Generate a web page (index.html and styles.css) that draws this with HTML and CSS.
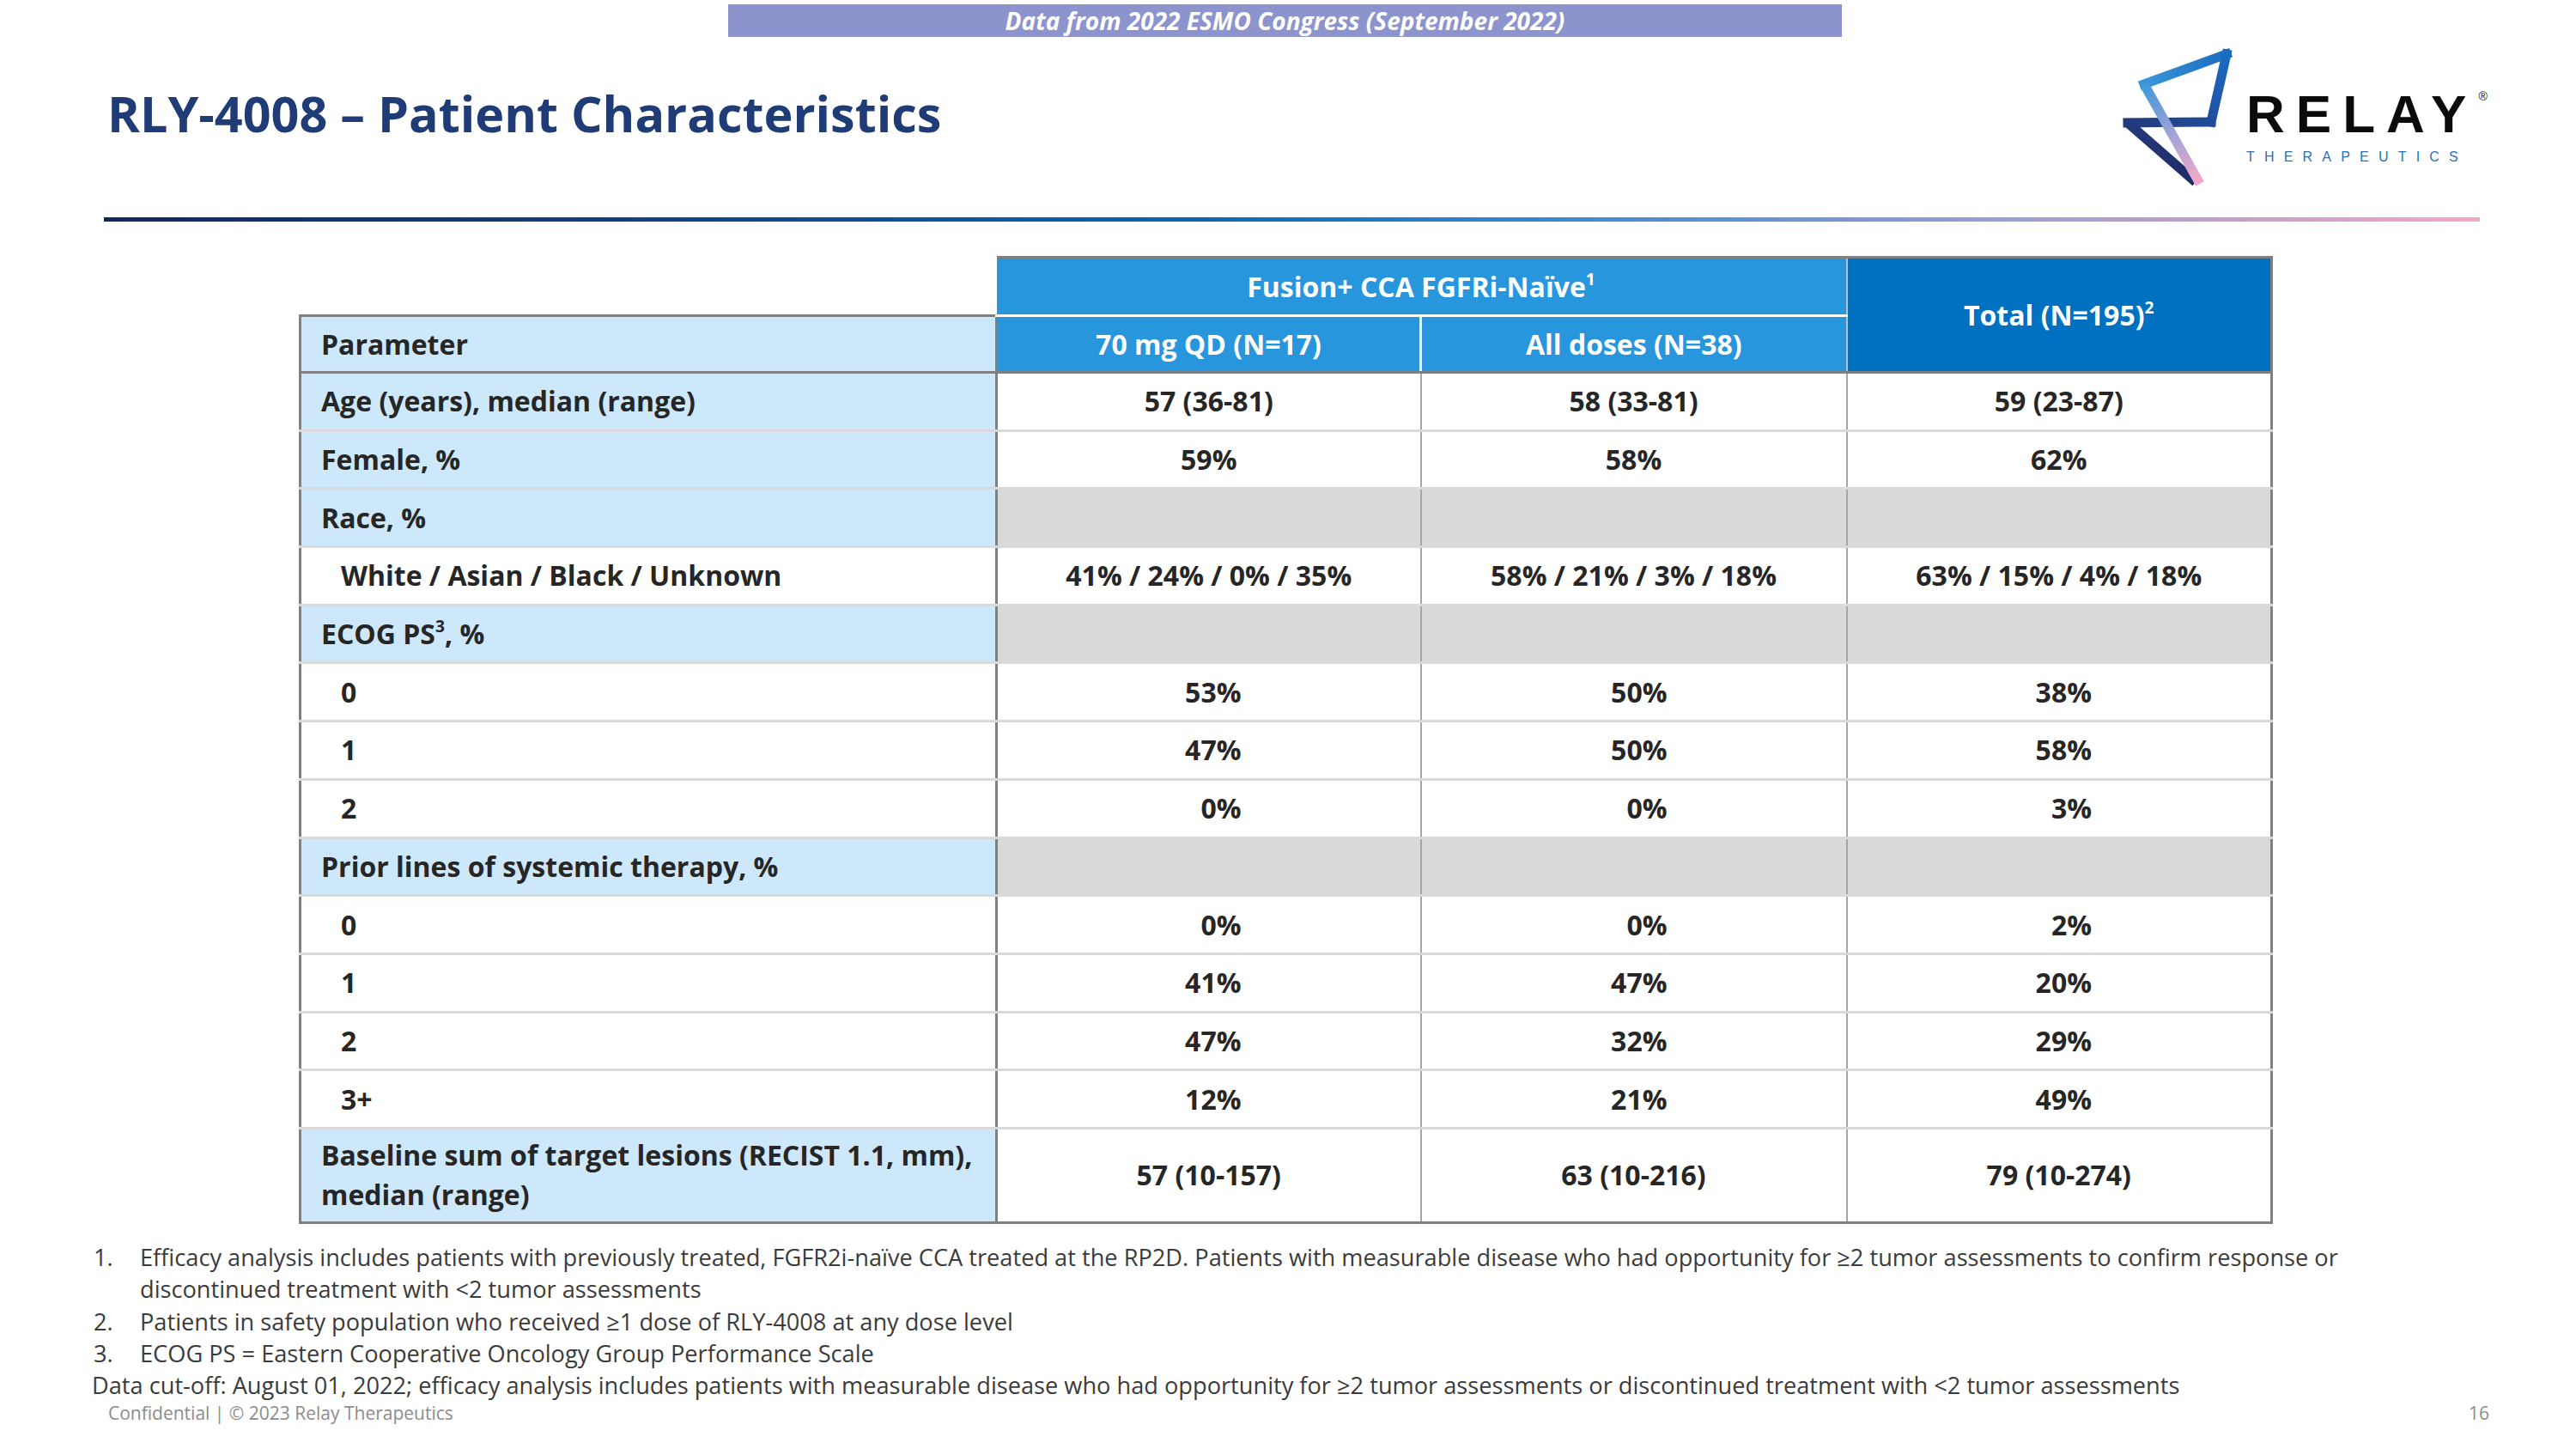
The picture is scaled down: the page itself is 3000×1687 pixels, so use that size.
FILE: index.html
```html
<!DOCTYPE html>
<html lang="en">
<head>
<meta charset="utf-8">
<title>RLY-4008 – Patient Characteristics</title>
<link rel="stylesheet" href="styles.css">
</head>
<body>
<div class="slide">
  <div class="banner">Data from 2022 ESMO Congress (September 2022)</div>
  <header class="head">
    <h1 class="title">RLY-4008 – Patient Characteristics</h1>
    <div class="logo">
      <svg class="mark" width="140" height="170" viewBox="0 0 140 170" xmlns="http://www.w3.org/2000/svg">
        <defs>
          <linearGradient id="gTop" x1="0" y1="0" x2="1" y2="0">
            <stop offset="0" stop-color="#3a96d9"/>
            <stop offset="1" stop-color="#1a6cc0"/>
          </linearGradient>
          <linearGradient id="gRight" x1="0" y1="0" x2="0" y2="1">
            <stop offset="0" stop-color="#1a6cc0"/>
            <stop offset="1" stop-color="#1f4f9f"/>
          </linearGradient>
          <linearGradient id="gMid" x1="1" y1="0" x2="0" y2="0">
            <stop offset="0" stop-color="#1f4d9b"/>
            <stop offset="1" stop-color="#233a7d"/>
          </linearGradient>
          <linearGradient id="gLow" x1="0" y1="0" x2="1" y2="1">
            <stop offset="0" stop-color="#24397c"/>
            <stop offset="1" stop-color="#1d2c64"/>
          </linearGradient>
          <linearGradient id="gLong" gradientUnits="userSpaceOnUse" x1="32" y1="48" x2="97" y2="163">
            <stop offset="0" stop-color="#3f98da"/>
            <stop offset="0.5" stop-color="#9ea4d6"/>
            <stop offset="1" stop-color="#f6a9c8"/>
          </linearGradient>
        </defs>
        <line x1="32" y1="48" x2="128" y2="13" stroke="url(#gTop)" stroke-width="11" stroke-linecap="square"/>
        <line x1="128" y1="13" x2="110" y2="92" stroke="url(#gRight)" stroke-width="11" stroke-linecap="square"/>
        <line x1="110" y1="92" x2="13" y2="93" stroke="url(#gMid)" stroke-width="11" stroke-linecap="square"/>
        <line x1="13" y1="93" x2="92" y2="162" stroke="url(#gLow)" stroke-width="11" stroke-linecap="butt"/>
        <line x1="32" y1="48" x2="97" y2="164" stroke="url(#gLong)" stroke-width="11" stroke-linecap="butt"/>
      </svg>
      <div class="wordmark">
        <div class="relay">RELAY<span class="reg">®</span></div>
        <div class="thera">THERAPEUTICS</div>
      </div>
    </div>
  </header>
  <div class="rule"></div>

  <table class="pt">
    <colgroup>
      <col class="c1"><col class="c2"><col class="c3"><col class="c4">
    </colgroup>
    <thead>
      <tr class="h1">
        <th class="blank"></th>
        <th class="grp" colspan="2">Fusion+ CCA FGFRi-Naïve<sup>1</sup></th>
        <th class="total" rowspan="2">Total (N=195)<sup>2</sup></th>
      </tr>
      <tr class="h2">
        <th class="param">Parameter</th>
        <th class="sub">70 mg QD (N=17)</th>
        <th class="sub sub2">All doses (N=38)</th>
      </tr>
    </thead>
    <tbody>
      <tr><td class="lbl">Age (years), median (range)</td><td>57 (36-81)</td><td>58 (33-81)</td><td class="last">59 (23-87)</td></tr>
      <tr><td class="lbl">Female, %</td><td>59%</td><td>58%</td><td class="last">62%</td></tr>
      <tr><td class="lbl">Race, %</td><td class="gr"></td><td class="gr"></td><td class="gr last"></td></tr>
      <tr><td class="lbl ind">White / Asian / Black / Unknown</td><td>41% / 24% / 0% / 35%</td><td>58% / 21% / 3% / 18%</td><td class="last">63% / 15% / 4% / 18%</td></tr>
      <tr><td class="lbl">ECOG PS<sup>3</sup>, %</td><td class="gr"></td><td class="gr"></td><td class="gr last"></td></tr>
      <tr><td class="lbl ind">0</td><td class="r">53%</td><td class="r">50%</td><td class="r last">38%</td></tr>
      <tr><td class="lbl ind">1</td><td class="r">47%</td><td class="r">50%</td><td class="r last">58%</td></tr>
      <tr><td class="lbl ind">2</td><td class="r">0%</td><td class="r">0%</td><td class="r last">3%</td></tr>
      <tr><td class="lbl">Prior lines of systemic therapy, %</td><td class="gr"></td><td class="gr"></td><td class="gr last"></td></tr>
      <tr><td class="lbl ind">0</td><td class="r">0%</td><td class="r">0%</td><td class="r last">2%</td></tr>
      <tr><td class="lbl ind">1</td><td class="r">41%</td><td class="r">47%</td><td class="r last">20%</td></tr>
      <tr><td class="lbl ind">2</td><td class="r">47%</td><td class="r">32%</td><td class="r last">29%</td></tr>
      <tr><td class="lbl ind">3+</td><td class="r">12%</td><td class="r">21%</td><td class="r last">49%</td></tr>
      <tr class="base"><td class="lbl">Baseline sum of target lesions (RECIST 1.1, mm), median (range)</td><td>57 (10-157)</td><td>63 (10-216)</td><td class="last">79 (10-274)</td></tr>
    </tbody>
  </table>

  <ol class="notes">
    <li><span class="n">1.</span><span>Efficacy analysis includes patients with previously treated, FGFR2i-naïve CCA treated at the RP2D. Patients with measurable disease who had opportunity for ≥2 tumor assessments to confirm response or discontinued treatment with &lt;2 tumor assessments</span></li>
    <li><span class="n">2.</span><span>Patients in safety population who received ≥1 dose of RLY-4008 at any dose level</span></li>
    <li><span class="n">3.</span><span>ECOG PS = Eastern Cooperative Oncology Group Performance Scale</span></li>
  </ol>
  <p class="cutoff">Data cut-off: August 01, 2022; efficacy analysis includes patients with measurable disease who had opportunity for ≥2 tumor assessments or discontinued treatment with &lt;2 tumor assessments</p>
  <footer class="foot"><span>Confidential | © 2023 Relay Therapeutics</span><span>16</span></footer>
</div>
</body>
</html>
```

FILE: styles.css
```css
html, body {
  margin: 0;
  padding: 0;
  background: #ffffff;
}

.slide {
  width: 3000px;
  height: 1687px;
  overflow: hidden;
  font-family: "Open Sans", "Noto Sans", sans-serif;
  color: #262626;
  background: #ffffff;
}

.banner {
  margin: 5px 0 0 848px;
  width: 1297px;
  height: 38px;
  background: #8d94cd;
  color: #ffffff;
  font-size: 28px;
  font-weight: 700;
  font-style: italic;
  line-height: 38px;
  text-align: center;
}

.head {
  display: flex;
  align-items: flex-start;
  height: 210px;
  padding: 0 100px 0 125px;
  box-sizing: border-box;
}

.title {
  flex: 1;
  margin: 50px 0 0;
  font-size: 57.5px;
  line-height: 79px;
  font-weight: 700;
  color: #1f3c77;
}

.logo {
  flex: none;
  width: 435px;
  display: flex;
  align-items: flex-start;
  margin-top: 7px;
}

.mark {
  display: block;
  flex: none;
}

.wordmark {
  margin: 52px 0 0 11px;
  font-family: "Liberation Sans", Arial, sans-serif;
}

.relay {
  font-size: 62px;
  line-height: 62px;
  font-weight: 700;
  color: #0b0b0b;
  letter-spacing: 13px;
  white-space: nowrap;
}

.reg {
  font-size: 14px;
  line-height: 20px;
  font-weight: 400;
  letter-spacing: 0;
  vertical-align: top;
  margin-left: 1px;
}

.thera {
  margin-top: 11px;
  font-size: 16px;
  line-height: 16px;
  color: #2a71b6;
  letter-spacing: 11.2px;
  white-space: nowrap;
}

.rule {
  margin-left: 121px;
  width: 2767px;
  height: 5px;
  background: linear-gradient(90deg, #0b2a5c 0%, #133f7e 22%, #0a64b2 45%, #3488cf 60%, #9b9fd3 80%, #c89ec9 90%, #f3a7c6 100%);
}

/* table */
.pt {
  margin: 40px 0 0 348px;
  width: 2296px;
  border-collapse: collapse;
  table-layout: fixed;
  font-size: 32px;
  font-weight: 700;
  line-height: 46px;
  color: #262626;
}

.c1 { width: 811px; }
.c2 { width: 494px; }
.c3 { width: 496px; }
.c4 { width: 495px; }

.pt th,
.pt td {
  padding: 0;
  text-align: center;
  vertical-align: middle;
}

.pt sup {
  font-size: 0.6em;
  line-height: 0;
  vertical-align: 0.75em;
}

.h1 th { height: 65px; }
.h2 th { height: 63px; }

.blank {
  border: none;
  background: transparent;
}

.grp {
  background: #2896dc;
  color: #ffffff;
  font-weight: 700;
  border-top: 3px solid #808080;
  border-bottom: 3px solid #ffffff;
}

.total {
  background: #0070c0;
  color: #ffffff;
  border-top: 3px solid #808080;
  border-right: 3px solid #808080;
  border-left: 2px solid #bfbfbf;
  border-bottom: 3px solid #808080;
}

.param {
  background: #cce8fa;
  text-align: left !important;
  padding-left: 23px !important;
  border-top: 3px solid #808080;
  border-left: 3px solid #808080;
  border-right: 3px solid #808080;
  border-bottom: 3px solid #808080;
}

.sub {
  background: #2896dc;
  color: #ffffff;
  border-bottom: 3px solid #808080;
}

.sub2 {
  border-left: 3px solid #ffffff;
}

.pt td {
  height: 64.7px;
  border-bottom: 3px solid #d9d9d9;
  border-left: 2px solid #a6a6a6;
}

.pt td.lbl {
  text-align: left;
  padding-left: 23px;
  background: #cce8fa;
  border-left: 3px solid #808080;
  border-right: 3px solid #808080;
}

.pt td.ind {
  padding-left: 46px;
  background: #ffffff;
}

.pt td.last {
  border-right: 3px solid #808080;
}

.pt td.gr {
  background: #d9d9d9;
}

.pt td.r {
  text-align: right;
  padding-right: 208px;
}

.base td {
  height: 107px;
  border-top: 3px solid #a6a6a6;
  border-bottom: 3px solid #808080;
}

.base td.lbl {
  padding-right: 10px;
}

/* footnotes */
.notes {
  margin: 20px 0 0 109px;
  padding: 0;
  list-style: none;
  width: 2650px;
  font-size: 27.2px;
  line-height: 37.3px;
  color: #3b3b3b;
}

.notes li {
  display: flex;
}

.notes .n {
  flex: none;
  width: 54px;
}

.cutoff {
  margin: 0 0 0 107px;
  font-size: 27.2px;
  line-height: 37.3px;
  color: #3b3b3b;
}

.foot {
  display: flex;
  justify-content: space-between;
  margin-top: 2px;
  padding: 0 101px 0 126px;
  font-size: 21px;
  line-height: 24px;
  color: #8c8c8c;
}
```
